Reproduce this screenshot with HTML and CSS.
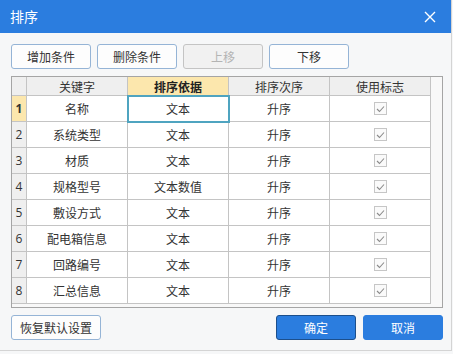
FILE: index.html
```html
<!DOCTYPE html>
<html>
<head>
<meta charset="utf-8">
<link rel="stylesheet" href="styles.css">
</head>
<body>
<div class="dialog">
  <div class="titlebar">
    <span class="title">排序</span>
    <svg class="close" width="12" height="12" viewBox="0 0 12 12"><path d="M1 1L11 11M11 1L1 11" stroke="#fff" stroke-width="1.4" fill="none"/></svg>
  </div>
  <div class="toolbar">
    <button class="btn">增加条件</button>
    <button class="btn">删除条件</button>
    <button class="btn disabled">上移</button>
    <button class="btn">下移</button>
  </div>
  <div class="grid">
    <div class="row head">
      <div class="cell num"></div>
      <div class="cell">关键字</div>
      <div class="cell hl">排序依据</div>
      <div class="cell">排序次序</div>
      <div class="cell">使用标志</div>
    </div>
    <div class="row">
      <div class="cell num cur">1</div>
      <div class="cell">名称</div>
      <div class="cell sel">文本</div>
      <div class="cell">升序</div>
      <div class="cell"><span class="cb"><svg width="9" height="8" viewBox="0 0 9 8"><path d="M1 4L3.5 6.5L8 1.5" stroke="#8a8a8a" stroke-width="1.1" fill="none"/></svg></span></div>
    </div>
    <div class="row">
      <div class="cell num">2</div>
      <div class="cell">系统类型</div>
      <div class="cell">文本</div>
      <div class="cell">升序</div>
      <div class="cell"><span class="cb"><svg width="9" height="8" viewBox="0 0 9 8"><path d="M1 4L3.5 6.5L8 1.5" stroke="#8a8a8a" stroke-width="1.1" fill="none"/></svg></span></div>
    </div>
    <div class="row">
      <div class="cell num">3</div>
      <div class="cell">材质</div>
      <div class="cell">文本</div>
      <div class="cell">升序</div>
      <div class="cell"><span class="cb"><svg width="9" height="8" viewBox="0 0 9 8"><path d="M1 4L3.5 6.5L8 1.5" stroke="#8a8a8a" stroke-width="1.1" fill="none"/></svg></span></div>
    </div>
    <div class="row">
      <div class="cell num">4</div>
      <div class="cell">规格型号</div>
      <div class="cell">文本数值</div>
      <div class="cell">升序</div>
      <div class="cell"><span class="cb"><svg width="9" height="8" viewBox="0 0 9 8"><path d="M1 4L3.5 6.5L8 1.5" stroke="#8a8a8a" stroke-width="1.1" fill="none"/></svg></span></div>
    </div>
    <div class="row">
      <div class="cell num">5</div>
      <div class="cell">敷设方式</div>
      <div class="cell">文本</div>
      <div class="cell">升序</div>
      <div class="cell"><span class="cb"><svg width="9" height="8" viewBox="0 0 9 8"><path d="M1 4L3.5 6.5L8 1.5" stroke="#8a8a8a" stroke-width="1.1" fill="none"/></svg></span></div>
    </div>
    <div class="row">
      <div class="cell num">6</div>
      <div class="cell">配电箱信息</div>
      <div class="cell">文本</div>
      <div class="cell">升序</div>
      <div class="cell"><span class="cb"><svg width="9" height="8" viewBox="0 0 9 8"><path d="M1 4L3.5 6.5L8 1.5" stroke="#8a8a8a" stroke-width="1.1" fill="none"/></svg></span></div>
    </div>
    <div class="row">
      <div class="cell num">7</div>
      <div class="cell">回路编号</div>
      <div class="cell">文本</div>
      <div class="cell">升序</div>
      <div class="cell"><span class="cb"><svg width="9" height="8" viewBox="0 0 9 8"><path d="M1 4L3.5 6.5L8 1.5" stroke="#8a8a8a" stroke-width="1.1" fill="none"/></svg></span></div>
    </div>
    <div class="row">
      <div class="cell num">8</div>
      <div class="cell">汇总信息</div>
      <div class="cell">文本</div>
      <div class="cell">升序</div>
      <div class="cell"><span class="cb"><svg width="9" height="8" viewBox="0 0 9 8"><path d="M1 4L3.5 6.5L8 1.5" stroke="#8a8a8a" stroke-width="1.1" fill="none"/></svg></span></div>
    </div>
  </div>
  <div class="footer">
    <button class="btn wide">恢复默认设置</button>
    <div class="spacer"></div>
    <button class="btn primary ok">确定</button>
    <button class="btn primary">取消</button>
  </div>
</div>
</body>
</html>
```
FILE: styles.css
```css
html, body {
  margin: 0;
  padding: 0;
  background: #f6f7f8;
}
body {
  font-family: "Noto Sans CJK SC", "Noto Sans", sans-serif;
  font-size: 12px;
  color: #333;
}
.dialog {
  width: 451px;
  height: 350px;
  border-right: 1px solid #d4d4d4;
  border-bottom: 1px solid #d4d4d4;
  background: #f6f7f8;
}
.titlebar {
  height: 33px;
  background: #2b7ddf;
  display: flex;
  align-items: center;
  justify-content: space-between;
  padding: 0 15px 0 10px;
}
.title {
  color: #fff;
  font-size: 14px;
  line-height: 33px;
}
.close {
  display: block;
}
.toolbar {
  display: flex;
  gap: 6px;
  padding: 11px 0 0 11px;
}
.btn {
  width: 80px;
  height: 25px;
  box-sizing: border-box;
  border: 1px solid #95b4d6;
  border-radius: 3px;
  background: #fdfdfd;
  font-family: "Noto Sans CJK SC", "Noto Sans", sans-serif;
  font-size: 12px;
  color: #333;
  padding: 0;
  line-height: 23px;
}
.btn.disabled {
  border-color: #c4c4c4;
  background: #f1f1f1;
  color: #b4b4b4;
}
.grid {
  margin: 7px 0 0 11px;
  width: 430px;
  height: 230px;
  border: 1px solid #a5a5a5;
  background: #f8f8f8;
}
.row {
  display: flex;
  height: 26px;
}
.row.head {
  height: 19px;
}
.cell {
  width: 100px;
  box-sizing: content-box;
  border-right: 1px solid #c4c4c4;
  border-bottom: 1px solid #c4c4c4;
  background: #fff;
  display: flex;
  align-items: center;
  justify-content: center;
  color: #333;
}
.head .cell {
  background: #efefef;
  color: #333;
}
.head .cell.hl {
  background: #fce7ad;
  font-weight: bold;
  color: #222;
}
.cell.num {
  width: 14px;
  background: #efefef;
  justify-content: center;
  font-family: "Open Sans", "Noto Sans", sans-serif;
  font-size: 12px;
}
.cell.num.cur {
  background: #fce7ad;
  font-weight: bold;
}
.cell.sel {
  outline: 2px solid #4fa4c0;
  outline-offset: -1px;
  position: relative;
  z-index: 1;
}
.cb {
  width: 11px;
  height: 11px;
  border: 1px solid #c6c6c6;
  background: #fafafa;
  display: flex;
  align-items: center;
  justify-content: center;
}
.cb svg {
  display: block;
}
.footer {
  display: flex;
  gap: 7px;
  padding: 7px 8px 0 11px;
}
.spacer {
  flex: 1;
}
.btn.wide {
  width: 90px;
}
.btn.primary {
  background: #2b7ddf;
  border-color: #2b7ddf;
  color: #fff;
}
.btn.primary.ok {
  border-color: #1c4f8c;
}
```
